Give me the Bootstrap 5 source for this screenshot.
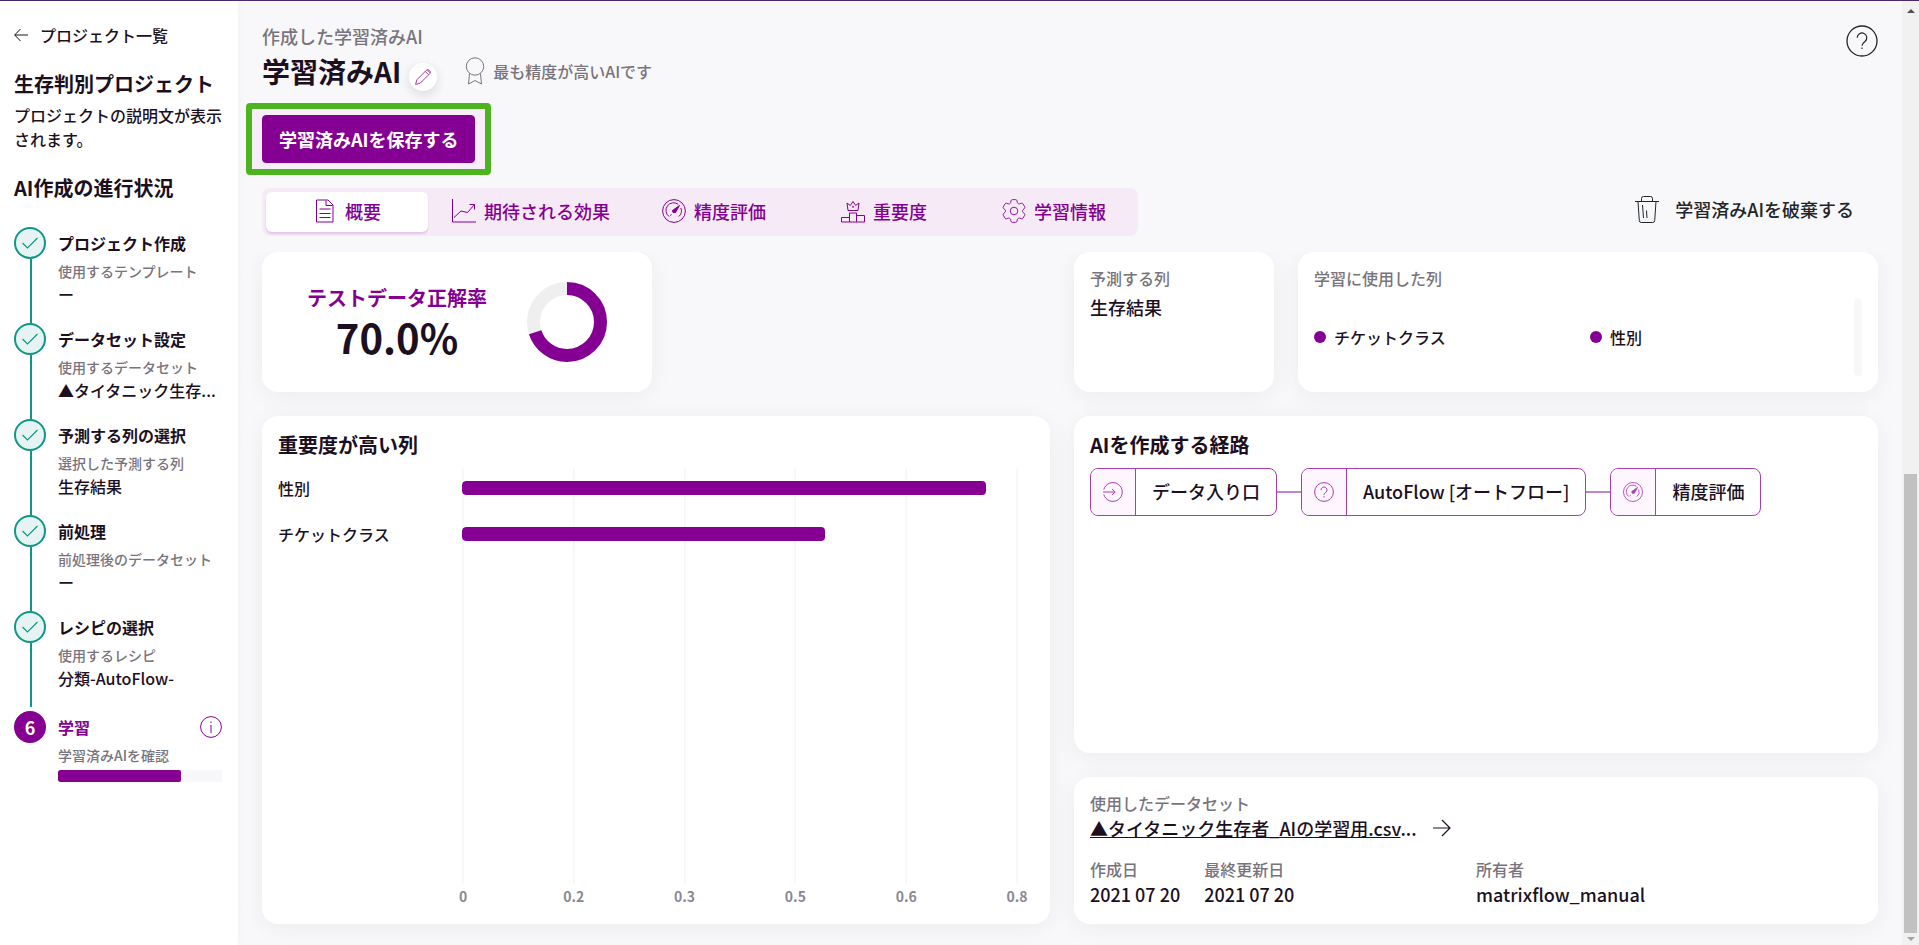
<!DOCTYPE html>
<html lang="ja">
<head>
<meta charset="utf-8">
<meta name="viewport" content="width=device-width, initial-scale=1">
<title>学習済みAI</title>
<link href="https://cdn.jsdelivr.net/npm/bootstrap@5.3.0/dist/css/bootstrap.min.css" rel="stylesheet">
<style>
:root{--ink:#1c101f;--muted:#78747d;--brand:#850092;--brand-soft:#a83cb0;--teal:#0f9688;--page:#f8f8fa;--track:#f8f8fa}
body{font-family:"Noto Sans CJK JP",sans-serif;font-weight:500;font-size:16px;line-height:24px;color:var(--ink);background:var(--page)}
svg{display:block;fill:none;stroke:currentColor;flex:none}
a{color:inherit}
.app{border-top:1px solid #4b2a6b}
.side{width:238px;flex:none;padding:22px 16px 16px 14px;box-shadow:0 0 12px rgba(0,0,0,.03)}
.back{gap:12px}
.t14{font-size:14px;line-height:20px}
.t18{font-size:18px;line-height:26px}
.t20{font-size:20px;line-height:30px;font-weight:700}
.hush{color:var(--muted)}
.brand{color:var(--brand)}
.gap-block{margin-bottom:22px}
.rail{width:32px;flex:none}
.dot{width:32px;height:32px;flex:none;border:2px solid var(--teal);background:#e5f3f2;color:var(--teal)}
.dot-now{border-color:var(--brand);background:var(--brand);color:#fff;font-size:18px;font-weight:700}
.rail-line{width:2px;background:var(--teal);margin-left:2px}
.step{min-height:96px;gap:12px}
.step-title{line-height:32px;font-weight:700;margin-bottom:2px}
.step-value{margin-top:1px}
.step-last{margin-top:4px}
.meter{height:12px;margin-top:5px;border-radius:2px;background:var(--track)}
.meter .progress-bar{background:var(--brand);border-radius:2px}
.main{padding:22px 24px 0}
.heading{margin-top:2px}
.page-title{font-size:28px;line-height:40px;font-weight:700}
.edit{width:28px;height:28px;box-shadow:0 4px 12px rgba(0,0,0,.12);color:var(--brand-soft);margin-left:8px;margin-top:12px}
.best{margin-left:28px}
.help{margin-top:2px}
.spot{border:6px solid #4cb41f;border-radius:4px;background:#f7eef9;padding:6px 10px;margin:12px 0 13px -16px}
.btn-save{--bs-btn-bg:var(--brand);--bs-btn-color:#fff;--bs-btn-hover-bg:#6d0078;--bs-btn-hover-color:#fff;--bs-btn-border-color:var(--brand);height:48px;font-size:18px;font-weight:700;padding:0 16px;border-radius:4px}
.tabs{background:#f6eaf6;border-radius:8px;padding:4px}
.tabs .nav-link{width:160px;height:40px;padding:0 0 2px;gap:8px;font-size:18px;color:var(--brand);border:0;background:none;border-radius:6px;font-weight:500}
.tabs .tab-wide{width:206px}
.tabs .tab-mid{width:180px}
.tabs .nav-link.active{width:162px;background:#fff;color:var(--brand);box-shadow:0 2px 2px rgba(133,0,146,.16)}
.drop{gap:16px;margin:0 24px 6px 0;font-weight:500}
.board{margin:16px -24px 0;padding:0 24px 21px;overflow:hidden;gap:24px;display:grid;grid-template-columns:788fr 804fr;grid-template-rows:140px 1fr 147px}
.panel{background:#fff;border-radius:16px;box-shadow:0 4px 24px rgba(0,0,0,.05);padding:14px 16px 16px}
.score{width:calc(50% - 4px);gap:40px}
.score-value{font-size:40px;line-height:48px;font-weight:700}
.pair{display:grid;grid-template-columns:200fr 580fr;gap:24px}
.cols{gap:12px}
.bullet{width:12px;height:12px;background:var(--brand)}
.groove{width:8px;height:78px;border-radius:4px;background:var(--track)}
.chart{grid-row:span 2;padding-right:32px}
.plot{display:grid;grid-template-columns:184px 1fr;margin-top:8px}
.plot-lines{grid-area:1/2}
.plot-lines i{width:2px;background:var(--track)}
.plot-rows{grid-area:1/1/2/3;gap:6px}
.plot-row{height:40px}
.plot-row label{width:184px;flex:none}
.plot-row .progress{height:14px;background:none;border-radius:4px}
.plot-row .progress-bar{background:var(--brand);border-radius:4px}
.axis{margin:2px 0 2px 184px;font-weight:700;color:#8b8892}
.axis span{width:2px}
.flow{margin-top:8px}
.node{height:48px;border:1px solid var(--brand-soft);border-radius:8px;overflow:hidden;font-size:18px}
.node-text{padding:0 16px 2px;align-self:center}
.node-icon{width:45px;background:#fdf6ff;border-right:1px solid var(--brand-soft);color:var(--brand-soft)}
.wire{width:24px;height:2px;background:#c583cb}
.scroller{width:17px;flex:none;background:#f1f1f1}
.thumb{width:13px;background:#c1c1c1}
.arr{border:4px solid transparent}
.arr-up{border-bottom-color:#505050}
.arr-down{border-top-color:#a3a3a3}
</style>
</head>
<body>
<div class="app d-flex min-vh-100">
<aside class="side bg-white">
  <a href="#" class="back gap-block d-flex align-items-center text-decoration-none"><svg width="14" height="14" viewBox="0 0 14 14"><path d="M14 7H.8M6.500 1L.7 7l5.800 6"/></svg>プロジェクト一覧</a>
  <h2 class="t20 mb-1 text-nowrap">生存判別プロジェクト</h2>
  <p class="gap-block">プロジェクトの説明文が表示されます。</p>
  <h2 class="t20 mb-4">AI作成の進行状況</h2>
  <ol class="list-unstyled mb-0">
    <li class="step d-flex"><div class="rail d-flex flex-column align-items-center"><span class="dot rounded-circle d-flex align-items-center justify-content-center"><svg width="16" height="12" viewBox="0 0 16 12"><path d="M.5 6l5 5L15.500 1" stroke-width="1.200"/></svg></span><span class="rail-line flex-grow-1"></span></div>
      <div><div class="step-title">プロジェクト作成</div><div class="t14 hush">使用するテンプレート</div><div class="step-value">ー</div></div></li>
    <li class="step d-flex"><div class="rail d-flex flex-column align-items-center"><span class="dot rounded-circle d-flex align-items-center justify-content-center"><svg width="16" height="12" viewBox="0 0 16 12"><path d="M.5 6l5 5L15.500 1" stroke-width="1.200"/></svg></span><span class="rail-line flex-grow-1"></span></div>
      <div><div class="step-title">データセット設定</div><div class="t14 hush">使用するデータセット</div><div class="step-value text-nowrap">▲タイタニック生存...</div></div></li>
    <li class="step d-flex"><div class="rail d-flex flex-column align-items-center"><span class="dot rounded-circle d-flex align-items-center justify-content-center"><svg width="16" height="12" viewBox="0 0 16 12"><path d="M.5 6l5 5L15.500 1" stroke-width="1.200"/></svg></span><span class="rail-line flex-grow-1"></span></div>
      <div><div class="step-title">予測する列の選択</div><div class="t14 hush">選択した予測する列</div><div class="step-value">生存結果</div></div></li>
    <li class="step d-flex"><div class="rail d-flex flex-column align-items-center"><span class="dot rounded-circle d-flex align-items-center justify-content-center"><svg width="16" height="12" viewBox="0 0 16 12"><path d="M.5 6l5 5L15.500 1" stroke-width="1.200"/></svg></span><span class="rail-line flex-grow-1"></span></div>
      <div><div class="step-title">前処理</div><div class="t14 hush">前処理後のデータセット</div><div class="step-value">ー</div></div></li>
    <li class="step d-flex"><div class="rail d-flex flex-column align-items-center"><span class="dot rounded-circle d-flex align-items-center justify-content-center"><svg width="16" height="12" viewBox="0 0 16 12"><path d="M.5 6l5 5L15.500 1" stroke-width="1.200"/></svg></span><span class="rail-line flex-grow-1"></span></div>
      <div><div class="step-title">レシピの選択</div><div class="t14 hush">使用するレシピ</div><div class="step-value">分類-AutoFlow-</div></div></li>
    <li class="step step-last d-flex"><div class="rail"><span class="dot dot-now rounded-circle d-flex align-items-center justify-content-center">6</span></div>
      <div class="flex-grow-1"><div class="step-title brand d-flex align-items-center justify-content-between">学習<svg width="22" height="22" viewBox="0 0 22 22"><circle cx="11" cy="11" r="10.400"/><path d="M11 9v8M11 5.500v1.500"/></svg></div><div class="t14 hush">学習済みAIを確認</div><div class="progress meter" role="progressbar" aria-label="学習の進捗" aria-valuenow="75" aria-valuemin="0" aria-valuemax="100"><div class="progress-bar" style="width:75%"></div></div></div></li>
  </ol>
</aside>

<main class="main flex-grow-1 d-flex flex-column">
  <header class="d-flex justify-content-between align-items-start">
    <div>
      <div class="t18 hush">作成した学習済みAI</div>
      <div class="heading d-flex align-items-center">
        <h1 class="page-title mb-0">学習済みAI</h1>
        <button type="button" class="edit btn p-0 border-0 rounded-circle bg-white d-flex align-items-center justify-content-center" aria-label="名前を編集"><svg width="16" height="16" viewBox="0 0 16 16"><path d="M.6 15.400l1.200-4.600L11.300 1.300a2 2 0 0 1 2.900 0l.5.5a2 2 0 0 1 0 2.900L5.200 14.200zM10.200 2.400l3.400 3.400M12.100.9l3 3"/></svg></button>
        <div class="best hush d-flex align-items-center"><svg class="me-2" width="20" height="28" viewBox="0 0 20 28"><circle cx="10" cy="9.500" r="8.700"/><path d="M4.500 16.500L3.500 27l6.500-3.500 6.500 3.500-1-10.500"/></svg><span>最も精度が高いAIです</span></div>
      </div>
    </div>
    <button type="button" class="help btn p-0 border-0" aria-label="ヘルプ"><svg width="32" height="32" viewBox="0 0 32 32"><circle cx="16" cy="16" r="15" stroke-width="1.300"/><path d="M11.200 12.700a4.800 4.800 0 1 1 7.800 3.800c-1.900 1.400-3 2.200-3 4.300M16 22.500v1.600" stroke-width="1.200"/></svg></button>
  </header>
  <div class="spot align-self-start"><button type="button" class="btn btn-save">学習済みAIを保存する</button></div>
  <div class="d-flex justify-content-between align-items-center">
    <div class="tabs nav flex-nowrap text-nowrap" role="tablist">
      <button type="button" role="tab" aria-selected="true" class="nav-link active d-flex align-items-center justify-content-center"><svg width="24" height="24" viewBox="0 0 24 24"><path d="M3.500 1h11.500l5 5v17H3.500zM13 1.500V6.500h6.500M6.500 10h11M6.500 14.500h11M6.500 18.500h11"/></svg>概要</button>
      <button type="button" role="tab" class="tab-wide nav-link d-flex align-items-center justify-content-center"><svg width="24" height="24" viewBox="0 0 24 24"><path d="M.5 0v23H24M2 18.500l7-6.500 6.500 1.500 7-8M17.500 5.500h5v5"/></svg>期待される効果</button>
      <button type="button" role="tab" class="nav-link d-flex align-items-center justify-content-center"><svg width="24" height="24" viewBox="0 0 24 24"><circle cx="12" cy="12" r="11.400"/><path d="M7 17.500a7.500 7.500 0 1 1 9.200-12.200M18.800 9a7.500 7.500 0 0 1-2 8.500M9.500 15.500l-1.500 1"/><path d="M17.500 6.500l-4 7-2.500 0-.5-2z" fill="currentColor"/></svg>精度評価</button>
      <button type="button" role="tab" class="tab-mid nav-link d-flex align-items-center justify-content-center"><svg width="24" height="24" viewBox="0 0 24 24"><path d="M.5 23v-4.500h8v-4.500h7v2.500h8v6.500zM8.500 18v5M15.500 16v7M7 11.500L6 4l3.300 2.500L12 2.500l2.700 4L18 4l-1 7.500z"/><circle cx="12" cy="7.800" r=".6"/></svg>重要度</button>
      <button type="button" role="tab" class="nav-link d-flex align-items-center justify-content-center"><svg width="24" height="24" viewBox="2.500 2.500 19 19" stroke-width=".7"><circle cx="12" cy="12" r="3"/><path d="M9.594 3.940c.09-.542.56-.94 1.110-.94h2.593c.55 0 1.020.398 1.110.94l.213 1.281c.063.374.313.686.645.87.074.04.147.083.22.127.325.196.72.257 1.075.124l1.217-.456a1.125 1.125 0 0 1 1.370.49l1.296 2.247a1.125 1.125 0 0 1-.26 1.431l-1.003.827c-.293.241-.438.613-.43.992a7.723 7.723 0 0 1 0 .255c-.008.378.137.75.43.991l1.004.827c.424.35.534.955.26 1.430l-1.298 2.247a1.125 1.125 0 0 1-1.369.491l-1.217-.456c-.355-.133-.75-.072-1.076.124a6.470 6.470 0 0 1-.22.128c-.331.183-.581.495-.644.869l-.213 1.281c-.09.543-.56.94-1.110.94h-2.594c-.55 0-1.019-.398-1.110-.94l-.213-1.281c-.062-.374-.312-.686-.644-.87a6.520 6.520 0 0 1-.22-.127c-.325-.196-.72-.257-1.076-.124l-1.217.456a1.125 1.125 0 0 1-1.369-.49l-1.297-2.247a1.125 1.125 0 0 1 .26-1.431l1.004-.827c.292-.24.437-.613.43-.991a6.932 6.932 0 0 1 0-.255c.007-.38-.138-.751-.43-.992l-1.004-.827a1.125 1.125 0 0 1-.26-1.430l1.297-2.247a1.125 1.125 0 0 1 1.370-.491l1.216.456c.356.133.751.072 1.076-.124.072-.044.146-.086.22-.128.332-.183.582-.495.644-.869z"/></svg>学習情報</button>
    </div>
    <button type="button" class="drop btn p-0 border-0 t18 d-flex align-items-center"><svg width="24" height="28" viewBox="0 0 24 28"><path d="M0 6.500h24M6.500 6V3.500a2 2 0 0 1 2-2h7a2 2 0 0 1 2 2V6M3 6.500l1.300 19a2 2 0 0 0 2 2h11.400a2 2 0 0 0 2-2L21 6.500M7.500 10l1 13M11.500 15.500l.500 7.500"/></svg>学習済みAIを破棄する</button>
  </div>

  <div class="board flex-grow-1">
    <section class="panel score d-flex align-items-center justify-content-center py-0">
      <div class="text-center text-nowrap"><div class="t20 brand">テストデータ正解率</div><div class="score-value">70.0%</div></div>
      <svg width="80" height="80" viewBox="0 0 80 80" stroke-width="13"><circle cx="40" cy="40" r="33.500" stroke="#efefef"/><circle cx="40" cy="40" r="33.500" stroke="#850092" pathLength="100" stroke-dasharray="70 100" transform="rotate(-90 40 40)"/></svg>
    </section>
    <div class="pair">
      <section class="panel"><div class="hush mb-1">予測する列</div><div class="t18">生存結果</div></section>
      <section class="panel"><div class="hush mb-2">学習に使用した列</div>
        <div class="d-flex align-items-center">
          <div class="cols flex-grow-1 d-flex">
            <div class="w-50 d-flex align-items-center gap-2"><span class="bullet rounded-circle"></span>チケットクラス</div>
            <div class="w-50 d-flex align-items-center gap-2"><span class="bullet rounded-circle"></span>性別</div>
          </div>
          <div class="groove"></div>
        </div>
      </section>
    </div>
    <section class="panel chart d-flex flex-column">
      <h2 class="t20 mb-0">重要度が高い列</h2>
      <div class="plot flex-grow-1">
        <div class="plot-lines d-flex justify-content-between"><i></i><i></i><i></i><i></i><i></i><i></i></div>
        <div class="plot-rows d-flex flex-column">
          <div class="plot-row d-flex align-items-center"><label id="f1">性別</label><div class="progress flex-grow-1" role="progressbar" aria-labelledby="f1" aria-valuenow="94"><div class="progress-bar" style="width:94.3%"></div></div></div>
          <div class="plot-row d-flex align-items-center"><label id="f2">チケットクラス</label><div class="progress flex-grow-1" role="progressbar" aria-labelledby="f2" aria-valuenow="65"><div class="progress-bar" style="width:65.2%"></div></div></div>
        </div>
      </div>
      <div class="axis t14 d-flex justify-content-between"><span class="d-flex justify-content-center">0</span><span class="d-flex justify-content-center">0.2</span><span class="d-flex justify-content-center">0.3</span><span class="d-flex justify-content-center">0.5</span><span class="d-flex justify-content-center">0.6</span><span class="d-flex justify-content-center">0.8</span></div>
    </section>
    <section class="panel">
      <h2 class="t20 mb-0">AIを作成する経路</h2>
      <div class="flow d-flex align-items-center text-nowrap">
        <div class="node d-flex"><span class="node-icon d-flex align-items-center justify-content-center"><svg width="20" height="20" viewBox="0 0 20 20"><path d="M.8 7.500a9.400 9.400 0 1 1 0 5M0 10h12M9 7l3.200 3L9 13"/></svg></span><span class="node-text">データ入り口</span></div>
        <span class="wire"></span>
        <div class="node d-flex"><span class="node-icon d-flex align-items-center justify-content-center"><svg width="20" height="20" viewBox="0 0 20 20"><circle cx="10" cy="10" r="9.400"/><path d="M7 8a3 3 0 1 1 4.900 2.300C10.700 11.200 10 11.700 10 13M10 14.200v1.300"/></svg></span><span class="node-text">AutoFlow [オートフロー]</span></div>
        <span class="wire"></span>
        <div class="node d-flex"><span class="node-icon d-flex align-items-center justify-content-center"><svg width="20" height="20" viewBox="0 0 24 24"><circle cx="12" cy="12" r="11.400"/><path d="M7 17.500a7.500 7.500 0 1 1 9.200-12.200M18.800 9a7.500 7.500 0 0 1-2 8.500M9.500 15.500l-1.500 1"/><path d="M17.500 6.500l-4 7-2.500 0-.5-2z" fill="currentColor"/></svg></span><span class="node-text">精度評価</span></div>
      </div>
    </section>
    <section class="panel">
      <div class="hush">使用したデータセット</div>
      <div class="t18 d-flex align-items-center mb-3 gap-3"><span><a href="#">▲タイタニック生存者_AIの学習用.csv</a>...</span><svg width="18" height="18" viewBox="0 0 18 18"><path d="M0 9h17M9 1l8 8-8 8" stroke-width="1.200"/></svg></div>
      <div class="row g-0">
        <div class="col-6 d-flex gap-4">
          <div><div class="hush">作成日</div><div class="t18">2021 07 20</div></div>
          <div><div class="hush">最終更新日</div><div class="t18">2021 07 20</div></div>
        </div>
        <div class="col-6"><div class="hush">所有者</div><div class="t18">matrixflow_manual</div></div>
      </div>
    </section>
  </div>
</main>

<div class="scroller d-flex flex-column align-items-center" aria-hidden="true">
  <span class="arr arr-up mt-1"></span>
  <span style="flex:459 0 0"></span>
  <span class="thumb" style="flex:457 0 0"></span>
  <span class="arr arr-down mt-1"></span>
</div>
</div>
<script src="https://cdn.jsdelivr.net/npm/bootstrap@5.3.0/dist/js/bootstrap.bundle.min.js"></script>
</body>
</html>
